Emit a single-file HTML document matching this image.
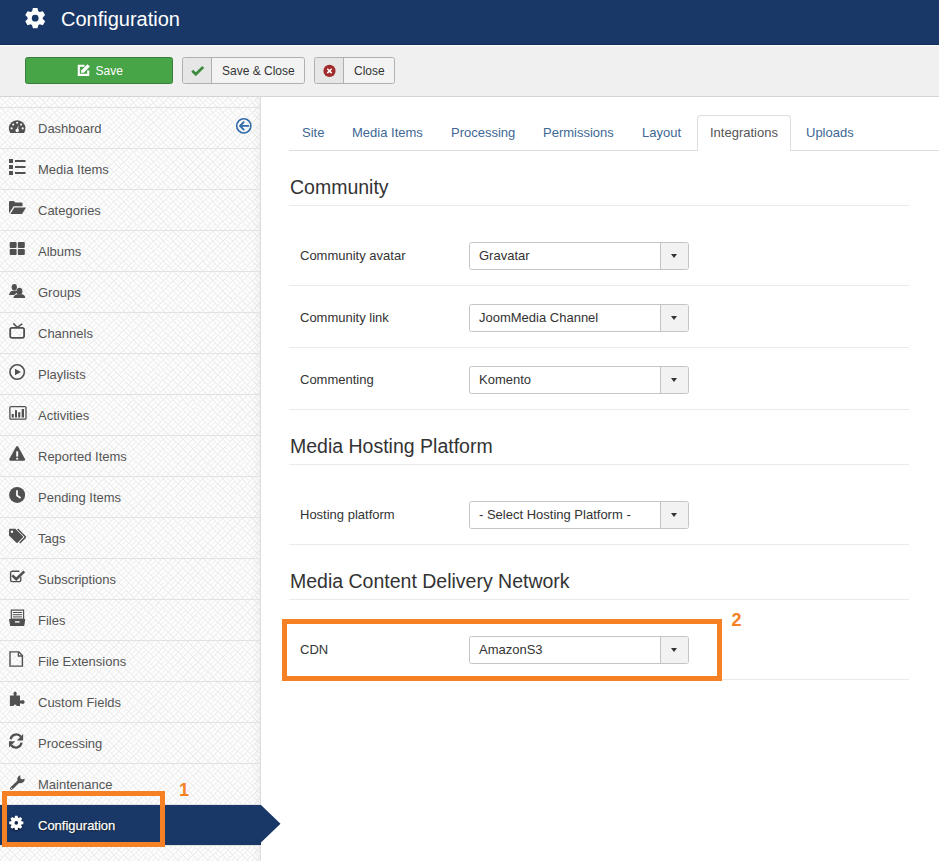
<!DOCTYPE html>
<html><head><meta charset="utf-8">
<style>
*{box-sizing:border-box;margin:0;padding:0}
html,body{width:939px;height:861px;overflow:hidden;background:#fff;font-family:"Liberation Sans",sans-serif;color:#333}
.abs{position:absolute}
#hdr{position:absolute;left:0;top:0;width:939px;height:45px;background:#1a3867;border-bottom:1px solid #142e58}
#hdr .t{position:absolute;left:61px;top:6px;font-size:20px;line-height:26px;color:#fff}
#tb{position:absolute;left:0;top:45px;width:939px;height:52px;background:#f0f0f0;border-top:1px solid #fff;border-bottom:1px solid #d4d4d4}
.btn{position:absolute;top:57px;height:27px;border:1px solid #b0b0b0;border-radius:2.5px;background:#f3f3f3;font-size:12px;color:#333;line-height:25px}
.btn .ic{position:absolute;left:0;top:0;bottom:0;width:34px;background:#e6e6e6;border-right:1px solid #b0b0b0;border-radius:2px 0 0 2px}
.btn .tx{position:absolute;top:1px}
#save{left:25px;width:148px;background:#47a447;border-color:#3a7c3a;color:#fff}
#side{position:absolute;left:0;top:97px;width:261px;height:764px;border-right:1px solid #dcdcdc;background:#fff}
.it{position:absolute;left:0;width:260px;height:41px;border-top:1px solid #e2e2e2;font-size:13px;color:#555}
.it .tx{position:absolute;left:38px;top:13px;line-height:16px}
.it svg{position:absolute;left:9px;top:12px}
#act{position:absolute;left:0;top:805px;width:261px;height:40px;background:#1a3867;color:#fff;font-size:13px}
#act .tx{position:absolute;left:38px;top:13px;line-height:16px;-webkit-text-stroke:0.25px #fff;text-shadow:0 1px 1px rgba(0,0,0,.75),1px 0 1px rgba(0,0,0,.4)}
.tab{position:absolute;top:115px;height:36px;font-size:13px;line-height:18px;color:#406794}
.tab span{position:absolute;top:8.5px;white-space:nowrap}
#tabline{position:absolute;left:289px;top:150px;width:650px;height:1px;background:#ddd}
#acttab{position:absolute;left:697px;top:115px;width:94px;height:36px;border:1px solid #ddd;border-bottom:none;border-radius:4px 4px 0 0;background:#fff}
h3{position:absolute;left:290px;font-size:19.5px;font-weight:normal;line-height:24px;color:#333}
.hl{position:absolute;left:289px;width:620px;height:1px;background:#eaeaea}
.lbl{position:absolute;margin-top:1px;left:300px;font-size:13px;line-height:18px;color:#333}
.sel{position:absolute;left:469px;width:220px;height:28px;border:1px solid #c5c5c5;border-radius:2.5px;background:#fff;font-size:13px;color:#333}
.sel .v{position:absolute;left:9px;top:4px;line-height:18px}
.sel .dd{position:absolute;right:0;top:0;bottom:0;width:28px;border-left:1px solid #c3c3c3;background:#f2f2f2;border-radius:0 2px 2px 0}
.sel .dd:after{content:"";position:absolute;left:10px;top:10.5px;border-left:3.6px solid transparent;border-right:3.6px solid transparent;border-top:4px solid #333}
.obox{position:absolute;border:5px solid #f68124}
.onum{position:absolute;font-size:18px;font-weight:bold;color:#f68124;line-height:18px}
</style></head><body>
<div id="hdr">
 <svg class="abs" style="left:24px;top:6.5px" width="22" height="22" viewBox="0 0 22 22"><path fill="#fff" d="M8.09,4.26 L8.92,1.05 L13.48,1.05 L14.31,4.26 L15.65,5.04 L18.85,4.15 L21.13,8.10 L18.76,10.42 L18.76,11.98 L21.13,14.30 L18.85,18.25 L15.65,17.36 L14.31,18.14 L13.48,21.35 L8.92,21.35 L8.09,18.14 L6.75,17.36 L3.55,18.25 L1.27,14.30 L3.64,11.98 L3.64,10.42 L1.27,8.10 L3.55,4.15 L6.75,5.04 Z M14.60,11.20 A3.4,3.4 0 1 0 7.80,11.20 A3.4,3.4 0 1 0 14.60,11.20 Z"/></svg>
 <div class="t">Configuration</div>
</div>
<div id="tb"></div>
<div class="btn" id="save"><svg class="abs" style="left:51px;top:6px" width="14" height="14" viewBox="0 0 14 14"><path d="M7.6,1.75 L1.8,1.75 L1.8,10.9 L11.2,10.9 L11.2,6.6" fill="none" stroke="#fff" stroke-width="2.1"/><path d="M3.9,8.7 L4.4,6.3 L10.5,0.2 L12.9,2.6 L6.8,8.7 Z" fill="#fff"/></svg><span class="tx" style="left:69.5px">Save</span></div>
<div class="btn" style="left:182px;width:123px"><div class="ic" style="width:29px"><svg class="abs" style="left:8px;top:8px" width="14" height="10" viewBox="0 0 14 10"><path d="M1.2,4.8 L4.8,8.2 L12.2,1" fill="none" stroke="#3c8a3c" stroke-width="2.8"/></svg></div><span class="tx" style="left:39px">Save &amp; Close</span></div>
<div class="btn" style="left:314px;width:81px"><div class="ic" style="width:29px"><svg class="abs" style="left:8px;top:6px" width="14" height="14" viewBox="0 0 14 14"><circle cx="6.5" cy="6.9" r="6.1" fill="#a22c2c"/><path d="M4.3,4.7 L8.7,9.1 M8.7,4.7 L4.3,9.1" stroke="#fff" stroke-width="1.5"/></svg></div><span class="tx" style="left:39px">Close</span></div>

<div id="side"><svg width="260" height="764" style="position:absolute;left:0;top:0"><defs><pattern id="wv" width="14" height="14" patternUnits="userSpaceOnUse" patternTransform="rotate(45)"><g stroke="#ececec" stroke-width="1" fill="none"><path d="M0,0.5H7M0,4H7M0.5,0V7"/><path d="M7.5,0V7M11,0V7M7,0.5H14"/><path d="M0.5,7V14M4,7V14M0,7.5H7"/><path d="M7,7.5H14M7,11H14M7.5,7V14"/></g></pattern><linearGradient id="sg" x1="0" x2="1"><stop offset="0" stop-color="#000" stop-opacity="0"/><stop offset="1" stop-color="#000" stop-opacity="0.035"/></linearGradient></defs><rect width="260" height="764" fill="url(#wv)"/><rect x="252" width="8" height="764" fill="url(#sg)"/></svg></div>
<div class="it" style="top:107px"><span class="tx">Dashboard</span></div>
<div class="it" style="top:148px"><span class="tx">Media Items</span></div>
<div class="it" style="top:189px"><span class="tx">Categories</span></div>
<div class="it" style="top:230px"><span class="tx">Albums</span></div>
<div class="it" style="top:271px"><span class="tx">Groups</span></div>
<div class="it" style="top:312px"><span class="tx">Channels</span></div>
<div class="it" style="top:353px"><span class="tx">Playlists</span></div>
<div class="it" style="top:394px"><span class="tx">Activities</span></div>
<div class="it" style="top:435px"><span class="tx">Reported Items</span></div>
<div class="it" style="top:476px"><span class="tx">Pending Items</span></div>
<div class="it" style="top:517px"><span class="tx">Tags</span></div>
<div class="it" style="top:558px"><span class="tx">Subscriptions</span></div>
<div class="it" style="top:599px"><span class="tx">Files</span></div>
<div class="it" style="top:640px"><span class="tx">File Extensions</span></div>
<div class="it" style="top:681px"><span class="tx">Custom Fields</span></div>
<div class="it" style="top:722px"><span class="tx">Processing</span></div>
<div class="it" style="top:763px"><span class="tx">Maintenance</span></div>
<div class="it" style="top:804px;height:1px"></div>
<div class="it" style="top:845px;height:16px"></div>

<div id="act"><span class="tx">Configuration</span></div>
<svg class="abs" style="left:260px;top:805px" width="22" height="40" viewBox="0 0 22 40"><path d="M0,0 L1,0 L20.5,18.7 L1,37.4 L1,39 L0,39 Z" fill="#1a3867"/></svg>
<svg class="abs" style="left:0;top:0;pointer-events:none" width="261" height="861" viewBox="0 0 261 861">
<g fill="#505050">
<!-- dashboard -->
<path d="M10.2,133 A8.3,8.3 0 1 1 24.1,133 Z"/>
<g fill="#fafafa"><circle cx="13.2" cy="124.6" r="1.05"/><circle cx="17.15" cy="122.8" r="1.05"/><circle cx="21.1" cy="124.6" r="1.05"/><circle cx="11.6" cy="128.4" r="1.05"/><circle cx="22.7" cy="128.4" r="1.05"/><circle cx="17.2" cy="130.5" r="1.7"/><path d="M16.4,130.2 L18.5,125 L18.1,130.6Z"/></g>
<!-- list -->
<rect x="9" y="159" width="4" height="4"/><rect x="9" y="165" width="4" height="4"/><rect x="9" y="171" width="4" height="4"/>
<rect x="15" y="160" width="10.5" height="2"/><rect x="15" y="166" width="10.5" height="2"/><rect x="15" y="172" width="10.5" height="2"/>
<!-- folder open -->
<path d="M9,213.5 L9,202.3 Q9,201 10.3,201 L13.8,201 L15.2,202.6 L21.3,202.6 Q22.6,202.6 22.6,203.9 L22.6,206.2 L13.6,206.2 Z"/>
<path d="M10.3,214 L14.4,207.4 L26.1,207.4 L22,214 Z"/>
<!-- albums -->
<rect x="9.7" y="241.9" width="6.9" height="6" rx="1"/><rect x="17.8" y="241.9" width="7" height="6" rx="1"/>
<rect x="9.7" y="248.9" width="6.9" height="6" rx="1"/><rect x="17.8" y="248.9" width="7" height="6" rx="1"/>
<!-- groups -->
<ellipse cx="14.3" cy="287.2" rx="2.6" ry="3.3"/>
<path d="M9,295 Q9.5,291.5 12.3,290.8 L16.8,290.8 Q17.8,291.2 18,292 L14,295 Z"/>
<ellipse cx="19.5" cy="291.3" rx="2.9" ry="3.5"/>
<path d="M13.4,298 Q14,294.8 17,294.2 L22.2,294.2 Q25,294.8 25.3,298 Z"/>
<!-- tv -->
<path d="M13.3,323.4 L17.2,327.3 L22.3,323.8" fill="none" stroke="#505050" stroke-width="1.5"/>
<rect x="10.2" y="327.8" width="13.9" height="10" rx="1.8" fill="none" stroke="#505050" stroke-width="1.8"/>
<!-- play -->
<circle cx="17.15" cy="372" r="7.2" fill="none" stroke="#505050" stroke-width="1.6"/>
<path d="M15,368.8 L15,375.2 L21,372 Z"/>
<!-- activities -->
<rect x="9.9" y="406.6" width="16.1" height="12.6" rx="1" fill="none" stroke="#505050" stroke-width="1.3"/>
<rect x="11.7" y="413.9" width="2.1" height="3.6"/><rect x="15" y="410.2" width="2" height="7.3"/><rect x="18.2" y="412.2" width="2.1" height="5.3"/><rect x="21.7" y="409" width="2.3" height="8.5"/>
<!-- warning -->
<path d="M16.2,446.6 Q17.15,445.4 18.1,446.6 L25,459 Q25.6,460.7 24,460.7 L10.3,460.7 Q8.7,460.7 9.3,459 Z"/>
<g fill="#fafafa"><rect x="16.2" y="451.3" width="2" height="5.3"/><rect x="16.2" y="457.8" width="2" height="1.7"/></g>
<!-- clock -->
<circle cx="17.15" cy="494.9" r="8"/>
<path d="M17,490.3 L17,495.6 L20.6,498" fill="none" stroke="#fafafa" stroke-width="1.8"/>
<!-- tags -->
<path d="M9,530 Q9,528.8 10.2,528.8 L15.3,528.8 L22.8,536.3 Q23.4,537 22.8,537.6 L17.6,542.8 Q17,543.4 16.4,542.8 L9,535.4 Z"/>
<circle cx="11.9" cy="531.8" r="1.25" fill="#fafafa"/>
<path d="M17.6,529 L25.1,536.5 Q25.6,537.1 25.1,537.6 L19.8,543" fill="none" stroke="#505050" stroke-width="1.5"/>
<!-- subscriptions -->
<path d="M20.8,576.8 L20.8,580 Q20.8,581.6 19.2,581.6 L12.2,581.6 Q10.6,581.6 10.6,580 L10.6,573 Q10.6,571.2 12.2,571.2 L19.4,571.2" fill="none" stroke="#505050" stroke-width="1.4"/>
<path d="M12.3,575.4 L16.2,579.2 L24.3,571.4" fill="none" stroke="#505050" stroke-width="2.6"/>
<!-- files -->
<path d="M11.3,610.2 L23.6,610.2 L23.6,619 L11.3,619 Z" fill="none" stroke="#505050" stroke-width="1.2"/>
<rect x="12.8" y="612" width="9.3" height="1"/><rect x="12.8" y="614.2" width="9.3" height="1"/><rect x="12.8" y="616.4" width="9.3" height="1"/>
<path d="M9,619 L25.3,619 L24.2,626 L10.2,626 Z"/>
<rect x="15" y="621.2" width="4.6" height="1.4" fill="#fafafa"/>
<!-- file-o -->
<path d="M10,651.9 L18.8,651.9 L22.4,655.5 L22.4,666.1 L10,666.1 Z" fill="none" stroke="#505050" stroke-width="1.4"/>
<path d="M18.4,652 L18.4,656 L22.4,656" fill="none" stroke="#505050" stroke-width="1.3"/>
<!-- puzzle -->
<path d="M9.9,695.6 L13.8,695.6 L13.8,694.5 A1.7,1.7 0 1 1 16.4,694.5 L16.4,695.6 L20,695.6 L20,700.5 L21.6,700.5 A1.9,1.9 0 1 1 21.6,703.5 L20,703.5 L20,706 L16.6,706 A1.5,1.5 0 0 0 13.6,706 L9.9,706 Z"/>
<!-- refresh -->
<path d="M10.6,739.2 A5.8,5.8 0 0 1 20.9,736.6" fill="none" stroke="#505050" stroke-width="2.3"/>
<path d="M23.1,734.1 L23.1,740.4 L16.9,740.4 Z"/>
<path d="M21.5,742.6 A5.8,5.8 0 0 1 11.2,745.3" fill="none" stroke="#505050" stroke-width="2.3"/>
<path d="M9,747.6 L9,741.3 L15.2,741.3 Z"/>
<!-- wrench -->
<path d="M11.4,788.6 L18.8,781.2" fill="none" stroke="#505050" stroke-width="2.8" stroke-linecap="round"/>
<path d="M18.2,782.2 A4.4,4.4 0 0 1 20.3,775.2 L20.3,778.2 L22.2,779.6 L24.7,778.4 A4.4,4.4 0 0 1 18.9,783 Z"/>
<circle cx="11.7" cy="788.3" r="0.6" fill="#fafafa"/>
</g>
<!-- config gear -->
<path fill="#fff" style="filter:drop-shadow(0 1px 1px rgba(0,0,0,.6))" d="M14.63,817.77 L15.01,815.82 L17.59,815.82 L17.97,817.77 L18.75,818.09 L20.39,816.98 L22.22,818.81 L21.11,820.45 L21.43,821.23 L23.38,821.61 L23.38,824.19 L21.43,824.57 L21.11,825.35 L22.22,826.99 L20.39,828.82 L18.75,827.71 L17.97,828.03 L17.59,829.98 L15.01,829.98 L14.63,828.03 L13.85,827.71 L12.21,828.82 L10.38,826.99 L11.49,825.35 L11.17,824.57 L9.22,824.19 L9.22,821.61 L11.17,821.23 L11.49,820.45 L10.38,818.81 L12.21,816.98 L13.85,818.09 Z M18.10,822.90 A1.8,1.8 0 1 0 14.50,822.90 A1.8,1.8 0 1 0 18.10,822.90 Z"/>
<!-- collapse arrow circle -->
<circle cx="243.8" cy="125.9" r="7.1" fill="none" stroke="#2f6ba8" stroke-width="1.6"/>
<path d="M248.4,125.9 L240.3,125.9 M243.7,122.2 L240,125.9 L243.7,129.6" fill="none" stroke="#2f6ba8" stroke-width="1.9" stroke-linecap="round" stroke-linejoin="round"/>
</svg>


<div id="tabline"></div>
<div id="acttab"></div>
<div class="tab" style="left:289px"><span style="left:13px">Site</span></div>
<div class="tab" style="left:339px"><span style="left:13px">Media Items</span></div>
<div class="tab" style="left:438px"><span style="left:13px">Processing</span></div>
<div class="tab" style="left:530px"><span style="left:13px">Permissions</span></div>
<div class="tab" style="left:629px"><span style="left:13px">Layout</span></div>
<div class="tab" style="left:697px;color:#555"><span style="left:13px">Integrations</span></div>
<div class="tab" style="left:793px"><span style="left:13px">Uploads</span></div>

<h3 style="top:175px">Community</h3>
<div class="hl" style="top:205px"></div>
<div class="lbl" style="top:246px">Community avatar</div>
<div class="sel" style="top:242px"><span class="v">Gravatar</span><div class="dd"></div></div>
<div class="hl" style="top:285px"></div>
<div class="lbl" style="top:308px">Community link</div>
<div class="sel" style="top:304px"><span class="v">JoomMedia Channel</span><div class="dd"></div></div>
<div class="hl" style="top:347px"></div>
<div class="lbl" style="top:370px">Commenting</div>
<div class="sel" style="top:366px"><span class="v">Komento</span><div class="dd"></div></div>
<div class="hl" style="top:409px"></div>

<h3 style="top:434px">Media Hosting Platform</h3>
<div class="hl" style="top:464px"></div>
<div class="lbl" style="top:505px">Hosting platform</div>
<div class="sel" style="top:501px"><span class="v">- Select Hosting Platform -</span><div class="dd"></div></div>
<div class="hl" style="top:544px"></div>

<h3 style="top:569px">Media Content Delivery Network</h3>
<div class="hl" style="top:599px"></div>
<div class="lbl" style="top:640px">CDN</div>
<div class="sel" style="top:636px"><span class="v">AmazonS3</span><div class="dd"></div></div>
<div class="hl" style="top:679px"></div>

<div class="obox" style="left:282px;top:619px;width:440px;height:62px"></div>
<div class="onum" style="left:731.5px;top:611px">2</div>
<div class="obox" style="left:2px;top:791px;width:163px;height:56px"></div>
<div class="onum" style="left:179px;top:781px">1</div>
</body></html>
